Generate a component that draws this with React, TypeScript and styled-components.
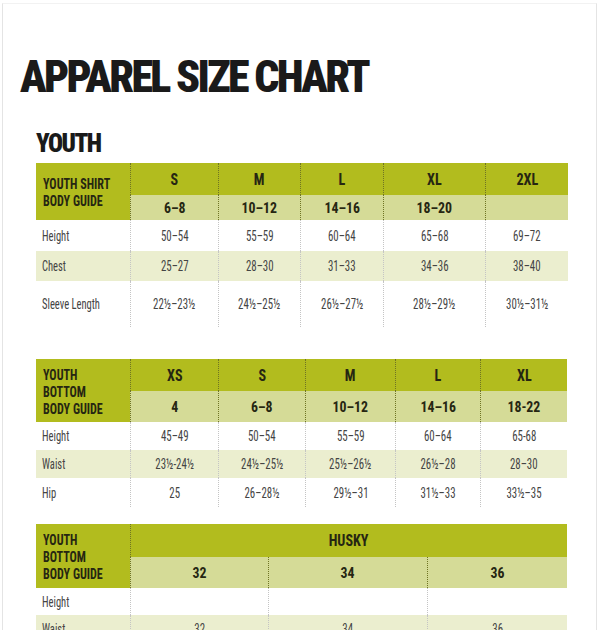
import styled, { createGlobalStyle } from "styled-components";

const FONT = `"Roboto Condensed", "Liberation Sans", sans-serif`;

const GlobalStyle = createGlobalStyle`
  body {
    margin: 0;
    background: #fff;
  }
`;

const Page = styled.div`
  box-sizing: border-box;
  margin: 3px 0 0 2px;
  width: 595px;
  min-height: 627px;
  padding: 0 0 0 17px;
  border-top: 1px solid #f2f2f2;
  border-left: 1px solid #e4e4e4;
  border-right: 1px solid #e4e4e4;
  font-family: ${FONT};
  color: #222;
`;

const Title = styled.h1`
  margin: 51px 0 0;
  font-size: 44px;
  line-height: 44px;
  font-weight: 900;
  letter-spacing: -2.7px;
  color: #1a1a1a;
`;

const Content = styled.div`
  padding-left: 16px;
`;

const SectionTitle = styled.h2`
  margin: 32px 0 7px;
  font-size: 25px;
  line-height: 25px;
  font-weight: 900;
  letter-spacing: -1.5px;
  color: #1a1a1a;
`;

const Table = styled.div<{ $cols: string; $rows: string; $gap?: number }>`
  display: grid;
  grid-template-columns: ${p => p.$cols};
  grid-template-rows: ${p => p.$rows};
  width: 532px;
  margin-top: ${p => p.$gap ?? 0}px;
`;

type Tone = "dark" | "light" | "stripe" | "plain";

const bg: Record<Tone, string> = {
  dark: "#b2bc1e",
  light: "#d5db97",
  stripe: "#ebeecf",
  plain: "#fff",
};

// the print uses a very narrow face, so glyphs are squeezed horizontally
const Squeeze = styled.span<{ $sx: number; $left?: boolean }>`
  display: inline-block;
  transform: scaleX(${p => p.$sx});
  transform-origin: ${p => (p.$left ? "left center" : "center")};
`;

const Cell = styled.div<{ $tone: Tone; $sep?: boolean; $span?: number }>`
  display: flex;
  align-items: center;
  justify-content: center;
  background: ${p => bg[p.$tone]};
  border-left: ${p =>
    p.$sep
      ? `1px dotted ${p.$tone === "dark" || p.$tone === "light" ? "#6f7424" : "#c4c4c4"}`
      : "none"};
  grid-column: ${p => (p.$span ? `span ${p.$span}` : "auto")};
  font-size: 15.5px;
  color: #444;
  white-space: nowrap;
`;

const GuideCell = styled.div`
  grid-row: span 2;
  display: flex;
  flex-direction: column;
  justify-content: center;
  padding: 3px 0 0 7px;
  background: ${bg.dark};
  font-size: 14px;
  line-height: 17px;
  font-weight: 700;
  color: #262612;
`;

const SizeCell = styled(Cell)`
  font-size: 16px;
  font-weight: 700;
  color: #262612;
`;

const AgeCell = styled(Cell)`
  font-size: 15px;
  font-weight: 700;
  color: #262612;
`;

const RowLabel = styled(Cell)`
  justify-content: flex-start;
  padding-left: 6px;
`;

const shirtCols = "94px 88px 82px 83px 102px 83px";
const bottomCols = "94px 88px 87px 90px 85px 87px";
const huskyCols = "94px 138px 159px 140px";

type Row = { label: string; tone: Tone; values: string[] };

const shirtRows: Row[] = [
  { label: "Height", tone: "plain", values: ["50–54", "55–59", "60–64", "65–68", "69–72"] },
  { label: "Chest", tone: "stripe", values: ["25–27", "28–30", "31–33", "34–36", "38–40"] },
  { label: "Sleeve Length", tone: "plain", values: ["22½–23½", "24½–25½", "26½–27½", "28½–29½", "30½–31½"] },
];

const bottomRows: Row[] = [
  { label: "Height", tone: "plain", values: ["45–49", "50–54", "55–59", "60–64", "65-68"] },
  { label: "Waist", tone: "stripe", values: ["23½-24½", "24½–25½", "25½–26½", "26½–28", "28–30"] },
  { label: "Hip", tone: "plain", values: ["25", "26–28½", "29½–31", "31½–33", "33½–35"] },
];

const huskyRows: Row[] = [
  { label: "Height", tone: "plain", values: ["", "", ""] },
  { label: "Waist", tone: "stripe", values: ["32", "34", "36"] },
];

function DataRows({ rows }: { rows: Row[] }) {
  return (
    <>
      {rows.map(r => [
        <RowLabel key={r.label} $tone={r.tone}>
          <Squeeze $sx={0.68} $left>{r.label}</Squeeze>
        </RowLabel>,
        ...r.values.map((v, i) => (
          <Cell key={r.label + i} $tone={r.tone} $sep>
            <Squeeze $sx={0.7}>{v}</Squeeze>
          </Cell>
        )),
      ])}
    </>
  );
}

function Guide({ lines }: { lines: string[] }) {
  return (
    <GuideCell>
      {lines.map(l => <Squeeze key={l} $sx={0.86} $left>{l}</Squeeze>)}
    </GuideCell>
  );
}

function Sizes({ sizes }: { sizes: string[] }) {
  return (
    <>
      {sizes.map(s => (
        <SizeCell key={s} $tone="dark" $sep>
          <Squeeze $sx={0.88}>{s}</Squeeze>
        </SizeCell>
      ))}
    </>
  );
}

function Ages({ ages }: { ages: string[] }) {
  return (
    <>
      {ages.map((a, i) => (
        <AgeCell key={i} $tone="light" $sep>
          <Squeeze $sx={0.92}>{a}</Squeeze>
        </AgeCell>
      ))}
    </>
  );
}

export default function App() {
  return (
    <>
      <GlobalStyle />
      <Page>
        <Title>APPAREL SIZE CHART</Title>
        <Content>
          <SectionTitle>YOUTH</SectionTitle>

          <Table $cols={shirtCols} $rows="32px 25px 31px 30px 46px">
            <Guide lines={["YOUTH SHIRT", "BODY GUIDE"]} />
            <Sizes sizes={["S", "M", "L", "XL", "2XL"]} />
            <Ages ages={["6–8", "10–12", "14–16", "18–20", ""]} />
            <DataRows rows={shirtRows} />
          </Table>

          <Table $cols={bottomCols} $rows="32px 31px 28px 28px 29px" $gap={32}>
            <Guide lines={["YOUTH", "BOTTOM", "BODY GUIDE"]} />
            <Sizes sizes={["XS", "S", "M", "L", "XL"]} />
            <Ages ages={["4", "6–8", "10–12", "14–16", "18-22"]} />
            <DataRows rows={bottomRows} />
          </Table>

          <Table $cols={huskyCols} $rows="33px 31px 27px 28px" $gap={17}>
            <Guide lines={["YOUTH", "BOTTOM", "BODY GUIDE"]} />
            <SizeCell $tone="dark" $sep $span={3}>
              <Squeeze $sx={0.88}>HUSKY</Squeeze>
            </SizeCell>
            <Ages ages={["32", "34", "36"]} />
            <DataRows rows={huskyRows} />
          </Table>
        </Content>
      </Page>
    </>
  );
}
